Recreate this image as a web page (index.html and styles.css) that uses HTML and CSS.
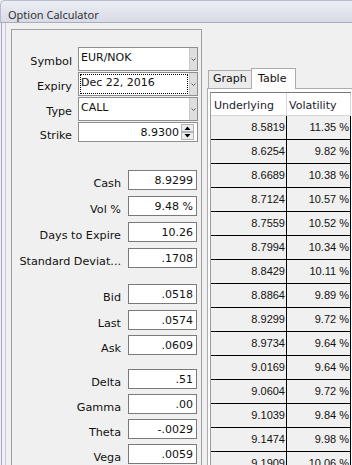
FILE: index.html
```html
<!DOCTYPE html>
<html>
<head>
<meta charset="utf-8">
<link rel="stylesheet" href="styles.css">
</head>
<body>
<div class="window">
  <div class="titlebar">Option Calculator</div>
  <div class="frame">
    <div class="frame-inner">
      <div class="left-panel">
        <div class="top-grid">
          <div class="lbl-top">Symbol</div>
          <div class="combo">
            <div class="combo-text">EUR/NOK</div>
            <div class="combo-btn"><svg width="5" height="3" viewBox="0 0 5 3"><path d="M0.5 0.5 L2.5 2.5 L4.5 0.5" fill="none" stroke="#5a5a5a" stroke-width="1"/></svg></div>
          </div>
          <div class="lbl-top">Expiry</div>
          <div class="combo">
            <div class="combo-text focus">Dec 22, 2016</div>
            <div class="combo-btn"><svg width="5" height="3" viewBox="0 0 5 3"><path d="M0.5 0.5 L2.5 2.5 L4.5 0.5" fill="none" stroke="#5a5a5a" stroke-width="1"/></svg></div>
          </div>
          <div class="lbl-top">Type</div>
          <div class="combo">
            <div class="combo-text">CALL</div>
            <div class="combo-btn"><svg width="5" height="3" viewBox="0 0 5 3"><path d="M0.5 0.5 L2.5 2.5 L4.5 0.5" fill="none" stroke="#5a5a5a" stroke-width="1"/></svg></div>
          </div>
          <div class="lbl-top lbl-strike">Strike</div>
          <div class="spin-edit">
            <div class="spin-value">8.9300</div>
            <svg class="spin-btns" width="13" height="16" viewBox="0 0 13 16">
              <rect x="0.5" y="0.5" width="12" height="7" fill="#ededed" stroke="#b4b4b4"/>
              <rect x="0.5" y="8.5" width="12" height="7" fill="#ededed" stroke="#b4b4b4"/>
              <path d="M3.5 6 L6.5 2.5 L9.5 6 Z" fill="#000"/>
              <path d="M3.5 10 L6.5 13.5 L9.5 10 Z" fill="#000"/>
            </svg>
          </div>
        </div>

        <div class="fields g1">
          <div class="lbl">Cash</div><div class="box">8.9299</div>
          <div class="lbl">Vol %</div><div class="box">9.48 %</div>
          <div class="lbl">Days to Expire</div><div class="box">10.26</div>
          <div class="lbl">Standard Deviat...</div><div class="box">.1708</div>
        </div>
        <div class="fields g2">
          <div class="lbl">Bid</div><div class="box">.0518</div>
          <div class="lbl">Last</div><div class="box">.0574</div>
          <div class="lbl">Ask</div><div class="box">.0609</div>
        </div>
        <div class="fields g3">
          <div class="lbl">Delta</div><div class="box">.51</div>
          <div class="lbl">Gamma</div><div class="box">.00</div>
          <div class="lbl">Theta</div><div class="box">-.0029</div>
          <div class="lbl">Vega</div><div class="box">.0059</div>
        </div>
      </div>

      <div class="right">
        <div class="tabs">
          <div class="tab tab-graph">Graph</div>
          <div class="tab tab-table">Table</div>
        </div>
        <div class="pane">
          <div class="grid-table">
            <div class="hrow">
              <div class="hcell c1">Underlying</div>
              <div class="hcell c2">Volatility</div>
            </div>
            <div class="drow"><div class="dcell c1">8.5819</div><div class="dcell c2">11.35 %</div></div>
            <div class="drow"><div class="dcell c1">8.6254</div><div class="dcell c2">9.82 %</div></div>
            <div class="drow"><div class="dcell c1">8.6689</div><div class="dcell c2">10.38 %</div></div>
            <div class="drow"><div class="dcell c1">8.7124</div><div class="dcell c2">10.57 %</div></div>
            <div class="drow"><div class="dcell c1">8.7559</div><div class="dcell c2">10.52 %</div></div>
            <div class="drow"><div class="dcell c1">8.7994</div><div class="dcell c2">10.34 %</div></div>
            <div class="drow"><div class="dcell c1">8.8429</div><div class="dcell c2">10.11 %</div></div>
            <div class="drow"><div class="dcell c1">8.8864</div><div class="dcell c2">9.89 %</div></div>
            <div class="drow"><div class="dcell c1">8.9299</div><div class="dcell c2">9.72 %</div></div>
            <div class="drow"><div class="dcell c1">8.9734</div><div class="dcell c2">9.64 %</div></div>
            <div class="drow"><div class="dcell c1">9.0169</div><div class="dcell c2">9.64 %</div></div>
            <div class="drow"><div class="dcell c1">9.0604</div><div class="dcell c2">9.72 %</div></div>
            <div class="drow"><div class="dcell c1">9.1039</div><div class="dcell c2">9.84 %</div></div>
            <div class="drow"><div class="dcell c1">9.1474</div><div class="dcell c2">9.98 %</div></div>
            <div class="drow"><div class="dcell c1">9.1909</div><div class="dcell c2">10.06 %</div></div>
          </div>
        </div>
      </div>
    </div>
  </div>
</div>
</body>
</html>
```

FILE: styles.css
```css
* { box-sizing: border-box; }
html, body { margin: 0; padding: 0; }
body {
  width: 352px;
  height: 465px;
  overflow: hidden;
  background: #f0f0f0;
  font-family: "DejaVu Sans", sans-serif;
  font-size: 11px;
  color: #111;
}
.window {
  width: 352px;
  height: 465px;
  overflow: hidden;
  background: #f0f0f0;
}
.titlebar {
  height: 23px;
  padding: 6px 0 0 7px;
  border-top: 1px solid #b9bbcf;
  border-left: 1px solid #b9bbcf;
  border-bottom: 1px solid #a9acbb;
  border-top-left-radius: 5px;
  background: linear-gradient(#eceef4, #d8dbe5);
  font-family: "Noto Sans", sans-serif;
  font-size: 11px;
  line-height: 15px;
  color: #333;
}
.frame {
  height: 442px;
  margin-left: 1px;
  border-left: 1px solid #a6a6cc;
}
.frame-inner {
  display: flex;
  align-items: flex-start;
  height: 100%;
  margin-left: 3px;
  border-left: 1px solid #c9c9e0;
}
.left-panel {
  flex: none;
  width: 191px;
  height: 460px;
  margin: 6px 0 0 5px;
  border: 1px solid #a0a0a0;
  padding-top: 17px;
}
.top-grid {
  display: grid;
  grid-template-columns: 60px 120px;
  column-gap: 6px;
  row-gap: 1px;
}
.lbl-top {
  text-align: right;
  align-self: end;
  font-size: 11.2px;
  line-height: 13px;
  padding-bottom: 3px;
  white-space: nowrap;
}
.lbl-strike { padding-bottom: 0; }
.combo {
  height: 24px;
  border: 1px solid #8e8e8e;
  background: #fff;
  display: flex;
}
.combo-text {
  flex: 1;
  margin: 1px;
  border: 1px dotted transparent;
  padding-top: 1px;
  line-height: 14px;
  white-space: nowrap;
}
.combo-text.focus { border-color: #000; }
.combo-btn {
  width: 8px;
  background: #dedede;
  border-left: 1px solid #c8c8c8;
  display: flex;
  align-items: center;
  justify-content: center;
}
.combo-btn svg { display: block; }
.spin-edit {
  height: 20px;
  border: 1px solid #8e8e8e;
  background: #fff;
  display: flex;
  align-items: center;
}
.spin-value {
  flex: 1;
  text-align: right;
  padding: 1px 2px 0 0;
  line-height: 13px;
}
.spin-btns { display: block; margin-right: 3px; }
.fields {
  display: grid;
  grid-template-columns: 109px 69px;
  column-gap: 7px;
}
.g1 { margin-top: 28px; row-gap: 6px; }
.g2 { margin-top: 16px; row-gap: 5.5px; }
.g3 { margin-top: 14px; row-gap: 5px; }
.lbl {
  text-align: right;
  align-self: end;
  font-size: 11.2px;
  line-height: 13px;
  white-space: nowrap;
}
.box {
  height: 20px;
  border: 1px solid #7a7a7a;
  background: #fff;
  text-align: right;
  padding: 3px 3px 0 0;
  line-height: 13px;
}
.right {
  flex: 1;
  margin-left: 5px;
  min-width: 0;
}
.tabs {
  display: flex;
  align-items: flex-end;
  margin-top: 45px;
  height: 20px;
  padding-left: 1px;
  position: relative;
  z-index: 1;
}
.tab {
  border: 1px solid #acacac;
  border-bottom: none;
  line-height: 13px;
  white-space: nowrap;
}
.tab-graph {
  width: 43px;
  height: 18px;
  border-right: none;
  padding: 1px 0 0 4px;
  background: #ebebeb;
}
.tab-table {
  width: 45px;
  height: 21px;
  margin-bottom: -1px;
  padding: 3px 0 0 6px;
  background: #fcfcfc;
}
.pane {
  width: 152px;
  height: 400px;
  border: 1px solid #acacac;
  background: #fcfcfc;
  padding: 3px 0 0 2px;
}
.grid-table {
  width: 141px;
  border-left: 1px solid #9a9a9a;
  border-top: 1px solid #7a7a7a;
}
.hrow, .drow { display: flex; }
.c1 { width: 76px; }
.c2 { width: 64px; }
.hcell {
  height: 23px;
  background: #fff;
  border-right: 1px solid #d6d6d6;
  border-bottom: 1px solid #d6d6d6;
  padding: 6px 0 0 3px;
  line-height: 13px;
  color: #1a1a2e;
  white-space: nowrap;
}
.hcell.c2 { padding-left: 2px; }
.dcell {
  height: 24px;
  background: #f0f0f0;
  border-right: 1px solid #000;
  border-bottom: 1px solid #000;
  font-family: "Liberation Sans", Arial, sans-serif;
  font-size: 11px;
  line-height: 23px;
  text-align: right;
  padding-right: 1px;
  color: #111;
}
```
